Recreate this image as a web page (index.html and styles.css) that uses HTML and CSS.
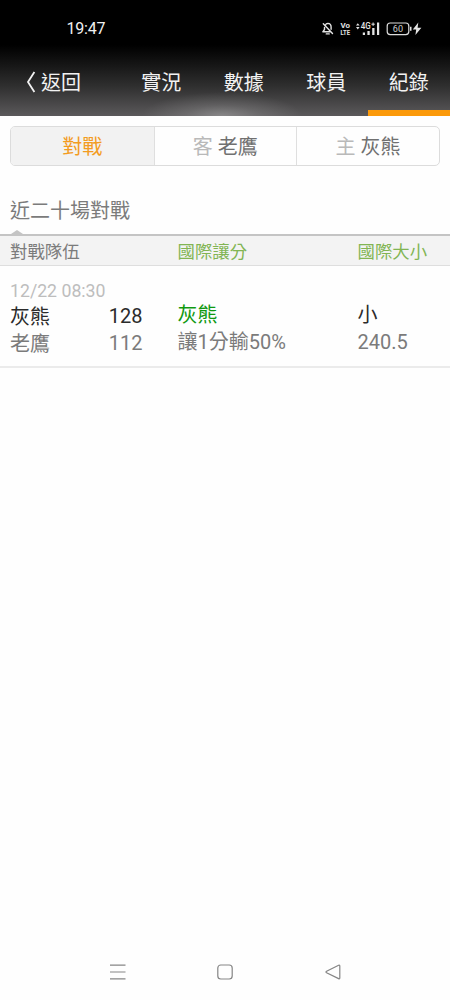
FILE: index.html
```html
<!DOCTYPE html>
<html lang="zh-Hant">
<head>
<meta charset="utf-8">
<title>紀錄</title>
<link rel="stylesheet" href="styles.css">
</head>
<body>
<div class="screen">
  <header class="top">
    <div class="status">
      <span class="clock">19:47</span>
      <svg class="status-icons" width="104" height="20" viewBox="320 18 104 20">
        <g fill="none" stroke="#e4e4e4" stroke-width="1.4" stroke-linecap="round" stroke-linejoin="round">
          <path d="M325.4 25.2C326 23.6 326.9 23.4 327.8 23.4C330 23.5 331.1 25.2 331.1 27V29.2M324.5 27.5V29.5L322.8 31.8H330.2M326.3 33.9H329.2M323.3 23.8L332.5 33.6"/>
        </g>
        <g class="badge">
          <text x="340.5" y="27.8" textLength="9.5" lengthAdjust="spacingAndGlyphs">Vo</text>
          <text x="340.5" y="35.2" textLength="9.5" lengthAdjust="spacingAndGlyphs">LTE</text>
        </g>
        <g fill="#e4e4e4">
          <path d="M356 25.6L357.8 23.2L359.6 25.6ZM356 27L357.8 29.4L359.6 27Z"/>
          <path d="M362.8 32.6h2.2V35h-2.2ZM367.4 31h2.3v4h-2.3ZM372.2 28h2.3v7h-2.3ZM377 22.5h2.2V35H377Z"/>
          <path d="M410 26.8h1.5v4H410Z"/>
          <path d="M418.3 22.6L412.8 29.5H416.2L415.4 35L421.4 27.8H417.6Z"/>
        </g>
        <text class="network" x="360.8" y="28.8" textLength="10" lengthAdjust="spacingAndGlyphs">4G</text>
        <path d="M371.4 24.2h3.4M373.1 22.5v3.4" fill="none" stroke="#e4e4e4"/>
        <rect x="387.2" y="23" width="21.6" height="11.6" rx="3" fill="none" stroke="#dcdcdc" stroke-width="1.2"/>
        <text class="charge" x="392.8" y="32.1" textLength="10.2" lengthAdjust="spacingAndGlyphs">60</text>
      </svg>
    </div>
    <nav class="nav">
      <a class="back"><svg width="10" height="22" viewBox="0 0 10 22"><path d="M8.4 1L2 11L8.4 21" fill="none" stroke="#f2f2f2" stroke-width="1.8"/></svg><span>返回</span></a>
      <a class="tab">實況</a>
      <a class="tab">數據</a>
      <a class="tab">球員</a>
      <a class="tab active">紀錄</a>
    </nav>
  </header>
  <main>
    <div class="segments">
      <div class="segment selected">對戰</div>
      <div class="segment"><span class="side">客</span> 老鷹</div>
      <div class="segment"><span class="side">主</span> 灰熊</div>
    </div>
    <h1 class="title">近二十場對戰</h1>
    <div class="row table-head">
      <span>對戰隊伍</span><span class="green">國際讓分</span><span class="green">國際大小</span>
    </div>
    <div class="row match">
      <div class="teams">
        <div class="date">12/22 08:30</div>
        <div class="team winner"><span class="name">灰熊</span><span>128</span></div>
        <div class="team"><span class="name">老鷹</span><span>112</span></div>
      </div>
      <div class="odds"><div class="cover">灰熊</div><div>讓1分輸50%</div></div>
      <div class="odds"><div class="dark">小</div><div>240.5</div></div>
    </div>
  </main>
  <footer class="system-nav">
    <svg width="18" height="18" viewBox="0 0 18 18"><path d="M1 2.2H16.5M1 9H16.5M1 15.8H16.5"/></svg>
    <svg width="18" height="18" viewBox="0 0 18 18"><rect x="1.8" y="2" width="14.4" height="14" rx="3"/></svg>
    <svg width="18" height="18" viewBox="0 0 18 18"><path d="M15.8 3V15Q15.8 16.2 14.6 15.6L2.6 9.8Q1.4 9 2.6 8.2L14.6 2.3Q15.8 1.8 15.8 3Z"/></svg>
  </footer>
</div>
</body>
</html>
```

FILE: styles.css
```css
* { box-sizing: border-box; }
body {
  margin: 0;
  background: #fefefe;
  color: #7b7b7b;
  font-family: Roboto, "Noto Sans CJK TC", sans-serif;
  font-size: 20px;
}
.screen { display: flex; flex-direction: column; width: 450px; height: 1000px; }
.top {
  height: 116px;
  background:
    radial-gradient(ellipse 80px 24px at 222px 116px, rgba(255, 255, 255, .28), rgba(255, 255, 255, .12) 45%, rgba(255, 255, 255, 0)),
    linear-gradient(#000 0, #000 45px, #161616 65px, #303030 87px, #5b595b 116px);
}
.status { display: flex; justify-content: space-between; height: 48px; padding: 18px 26px 0 66.5px; }
.clock { color: #f0f0f0; font-size: 16px; line-height: 22px; letter-spacing: -.2px; }
.status-icons text { fill: #e4e4e4; font-family: Roboto, sans-serif; }
.status-icons .badge { font-size: 7.5px; font-weight: 700; }
.status-icons .network { font-size: 8.5px; font-weight: 500; }
.status-icons .charge { font-size: 9px; fill: #ccc; }
.nav { display: flex; height: 68px; color: #f2f2f2; line-height: 30px; }
.back { display: flex; gap: 5px; width: 120px; padding: 20px 0 0 26px; }
.back svg { margin-top: 3px; }
.tab { width: 82.5px; padding-top: 20px; text-align: center; }
.tab.active { border-bottom: 6px solid #fb990a; }
.segments {
  display: grid;
  grid-template-columns: 142.5px 142.5px 1fr;
  height: 40px;
  margin: 10px 10px 0;
  border: 1px solid #dcdcdc;
  border-radius: 5px;
  overflow: hidden;
  line-height: 41px;
  text-align: center;
}
.segment + .segment { border-left: 1px solid #dfdfdf; }
.segment { height: 38px; color: #707070; }
.selected { background: #f2f2f2; color: #f39c1f; }
.side { color: #b9b9b9; }
.title { position: relative; height: 68px; margin: 0; padding: 30px 10px 0; font-size: 20px; font-weight: 400; line-height: 30px; }
.title::after {
  content: "";
  position: absolute;
  left: 11px;
  bottom: 0;
  border: 6px solid transparent;
  border-top: 0;
  border-bottom: 4px solid #c4c4c4;
}
.row { display: grid; grid-template-columns: 167.5px 180px 1fr; padding-left: 10px; }
.table-head {
  height: 32px;
  border-top: 2px solid #c4c4c4;
  border-bottom: 1px solid #dedede;
  background: #f3f3f3;
  font-size: 17.4px;
  line-height: 32px;
}
.green { color: #82b553; }
.match { height: 102px; border-bottom: 2px solid #ebebeb; line-height: 27px; }
.date { height: 37px; padding-top: 12px; color: #bdbdbd; font-size: 17.7px; }
.teams { width: 132.5px; }
.team { display: flex; justify-content: space-between; height: 27px; }
.team .name { padding-top: 1px; }
.winner, .dark { color: #2b2b2b; }
.odds { padding-top: 36px; }
.cover { color: #109910; }
.system-nav { display: flex; justify-content: space-between; margin-top: auto; padding: 0 108.5px 19px; }
.system-nav svg { fill: none; stroke: #858585; stroke-width: 1.2; }
```
